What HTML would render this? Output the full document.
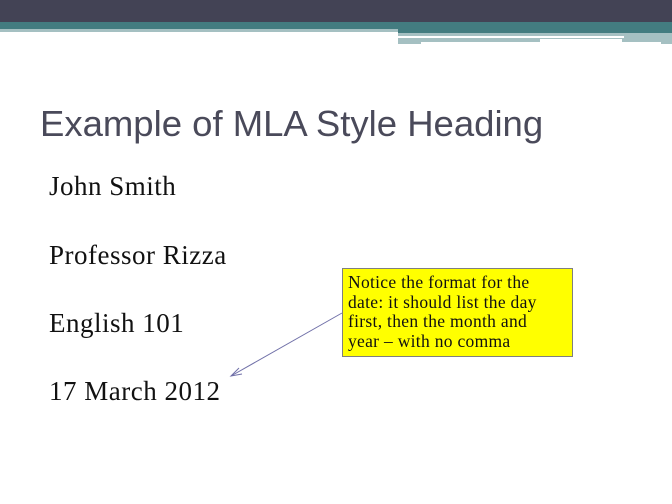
<!DOCTYPE html>
<html><head><style>
body{margin:0;width:672px;height:504px;background:#fff;position:relative;overflow:hidden;font-family:"Liberation Serif",serif}
div{position:absolute}
.b{left:49px;font-size:27px;letter-spacing:0.5px;color:#111;line-height:30px;white-space:nowrap}
</style></head><body>
<div style="left:0;top:0;width:672px;height:22px;background:#434355"></div>
<div style="left:0;top:22px;width:672px;height:7px;background:#437c80"></div>
<div style="left:0;top:29px;width:398px;height:3px;background:#a5c0c2"></div>
<div style="left:398px;top:29px;width:274px;height:4px;background:#437c80"></div>
<div style="left:398px;top:33px;width:274px;height:11px;background:#a5c0c2"></div>
<div style="left:398px;top:36px;width:226px;height:2px;background:#fff"></div>
<div style="left:421px;top:42px;width:240px;height:4px;background:#fff"></div>
<div style="left:540px;top:39px;width:82px;height:3px;background:#fff"></div>
<div style="left:40px;top:103px;font-family:'Liberation Sans',sans-serif;font-size:36.5px;color:#4a4a5a;white-space:nowrap">Example of MLA Style Heading</div>
<div class="b" style="top:171px">John Smith</div>
<div class="b" style="top:240px">Professor Rizza</div>
<div class="b" style="top:308px">English 101</div>
<div class="b" style="top:376px">17 March 2012</div>
<div style="left:342px;top:268px;width:221px;height:81px;padding:4px 3px 2px 5px;background:#ffff00;border:1px solid #7f7f7f;font-size:17.5px;letter-spacing:0.3px;line-height:19.5px;color:#111;white-space:nowrap">Notice the format for the<br>date: it should list the day<br>first, then the month and<br>year – with no comma</div>
<svg style="position:absolute;left:0;top:0" width="672" height="504"><line x1="342" y1="313" x2="231" y2="376" stroke="#7070a8" stroke-width="1"/><polyline points="239,368 231,376 242,374" fill="none" stroke="#7070a8" stroke-width="1"/></svg>
</body></html>
